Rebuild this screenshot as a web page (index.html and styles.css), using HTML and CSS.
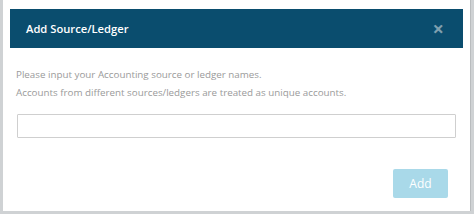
FILE: index.html
```html
<!DOCTYPE html>
<html lang="en">
<head>
    <meta charset="UTF-8">
    <title>Add Source/Ledger</title>
    <link rel="stylesheet" href="styles.css">
</head>
<body>
    <div class="modal">
        <div class="modal-header">
            <h3>Add Source/Ledger</h3>
            <span class="close">&times;</span>
        </div>
        <div class="modal-body">
            <p class="hint">
                Please input your Accounting source or ledger names.<br>
                Accounts from different sources/ledgers are treated as unique accounts.
            </p>
            <input type="text" class="ledger-input">
        </div>
        <div class="modal-footer">
            <button class="add-btn" disabled>Add</button>
        </div>
    </div>
</body>
</html>
```

FILE: styles.css
```css
* {
    margin: 0;
    padding: 0;
    box-sizing: border-box;
    font-family: 'Open Sans', 'Liberation Sans', sans-serif;
}

html, body {
    width: 474px;
    height: 214px;
    overflow: hidden;
}

body {
    background: #cfd2d4;
    padding: 0 3px 3px 3px;
}

.modal {
    background: white;
    height: 211px;
    border-right: 1px solid #b9bcbe;
    padding-top: 9px;
}

.modal-header {
    background: #0a4d6e;
    margin: 0 7px 0 7px;
    height: 39px;
    display: flex;
    align-items: center;
    justify-content: space-between;
    padding: 0 19px 0 16px;
}

.modal-header h3 {
    color: white;
    font-size: 11.2px;
    font-weight: 600;
}

.close {
    color: #7f9fae;
    font-size: 20px;
    font-weight: 700;
    line-height: 1;
}

.modal-body {
    padding: 18px 15px 0 13px;
}

.hint {
    color: #9a9a9a;
    font-size: 9.8px;
    line-height: 18px;
}

.ledger-input {
    display: block;
    width: 100%;
    height: 24px;
    margin-top: 12px;
    margin-left: 1px;
    border: 1px solid #cfcfcf;
    border-radius: 1px;
}

.modal-footer {
    display: flex;
    justify-content: flex-end;
    padding: 31px 22px 0 0;
}

.add-btn {
    width: 55px;
    height: 29px;
    border: none;
    border-radius: 2px;
    background: #a9d9e9;
    color: white;
    font-size: 12px;
}
```
